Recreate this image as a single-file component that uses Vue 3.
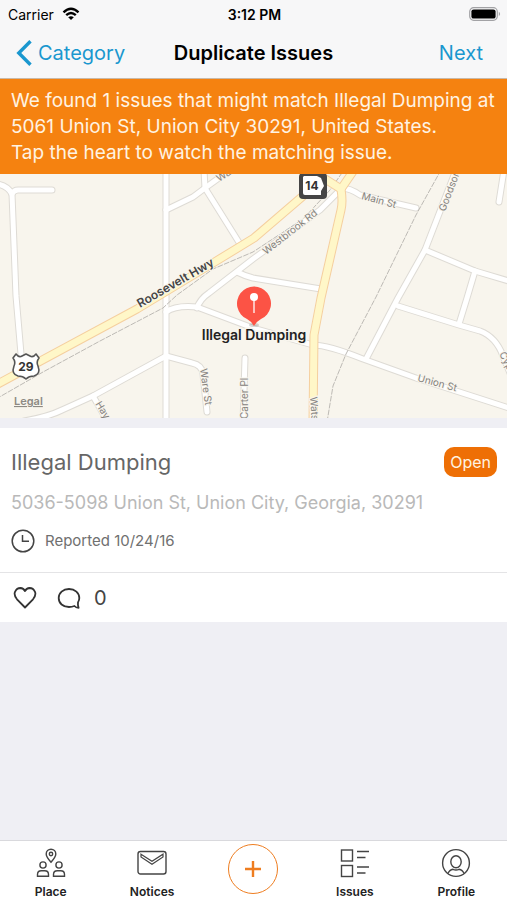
<script setup>
import { ref } from 'vue'

const issue = {
    title: 'Illegal Dumping',
    status: 'Open',
    address: '5036-5098 Union St, Union City, Georgia, 30291',
    reported: '10/24/16',
    comments: 0
}

const watching = ref(false)

const streets = [
    'M-4 10 Q7 11 12 20 L16 122 L21 180',
    'M12 20 Q14 16 18 16 L52 16',
    'M166 -4 V250',
    'M166 36 L193 23 L205 14 L230 -4',
    'M204 -4 L205 14 L240 70',
    'M341 15 L320 36 L253 85 L209 119 Q200 125 197 134',
    'M237 98 Q245 102 253 104 L321 115',
    'M166 138 Q176 131 197 133 L253 154 L313 171 Q328 171 363 185 L416 204 L512 235',
    'M456 -4 L425 76 L398 124 L366 185',
    'M425 76 L475 97 L512 108',
    'M475 97 L467 124 L459 150',
    'M398 132 L459 151 L480 157 Q496 163 503 182 L512 204',
    'M504 -4 L499 28',
    'M341 14 Q350 14 360 21 L416 34',
    'M24 247 Q48 243 62 236 L93 222 L166 182 L192 189 Q202 191 203 200 L207 238',
    'M93 222 L108 248',
    'M245 184 L243 250'
]

const highways = [
    'M-4 211 L137 135 L213 89 L254 64 L303 22 L318 8',
    'M322 3 L341 15',
    'M354 -4 L341 15 Q343 28 341 36 L321 124 L314 161 L313 250'
]

const railways = [
    'M-4 225 L43 198 L100 167 L163 134 L177 121 L213 95 L253 78 L303 45 L330 16 L344 -4',
    'M441 -4 L416 41 L376 123 L346 180 L333 212 L327 248'
]

const roadNames = [
    { text: 'Roosevelt Hwy', x: 140, y: 134, angle: -30, major: true },
    { text: 'Westbrook Rd', x: 266, y: 81, angle: -38 },
    { text: 'Main St', x: 361, y: 25, angle: 15 },
    { text: 'Goodson', x: 445, y: 38, angle: -69 },
    { text: 'Wa', x: 219, y: 8, angle: -32 },
    { text: 'Union St', x: 417, y: 207, angle: 15 },
    { text: 'Ware St', x: 200, y: 195, angle: 82 },
    { text: 'Carter Pl', x: 248, y: 245, angle: -90 },
    { text: 'Hay', x: 95, y: 230, angle: 58 },
    { text: 'Wats', x: 310, y: 223, angle: 86 },
    { text: 'Cyp', x: 499, y: 180, angle: 62 }
]
</script>

<template>
    <div class="screen">
        <header class="top">
            <div class="status-bar">
                <span class="carrier">
                    Carrier
                    <svg width="18" height="14" viewBox="0 0 18 14" fill="none" stroke="#000" stroke-width="2.4">
                        <path d="M1.5 5.3 Q9 -1.6 16.5 5.3" />
                        <path d="M4.2 8.2 Q9 3.9 13.8 8.2" />
                        <path d="M9 13 L6.2 10.3 Q9 8 11.8 10.3 Z" fill="#000" stroke="none" />
                    </svg>
                </span>
                <span class="time">3:12 PM</span>
                <svg class="battery" width="32" height="14" viewBox="0 0 32 14">
                    <rect x="0.7" y="0.7" width="27.6" height="12.6" rx="4" fill="none" stroke="#a2a2a5" stroke-width="1.2" />
                    <rect x="2.4" y="2.4" width="24.2" height="9.2" rx="2.2" />
                    <path d="M29.8 4.8 Q32.4 7 29.8 9.2 Z" fill="#a2a2a5" />
                </svg>
            </div>
            <nav class="nav-bar">
                <a href="#" class="nav-link">
                    <svg width="16" height="26" viewBox="0 0 16 26" fill="none" stroke="#1a97cf" stroke-width="3.4">
                        <path d="M14.5 1.3 L2.8 13 L14.5 24.7" />
                    </svg>
                    Category
                </a>
                <h1>Duplicate Issues</h1>
                <a href="#" class="nav-link next">Next</a>
            </nav>
        </header>

        <p class="banner">
            We found 1 issues that might match Illegal Dumping at 5061 Union St, Union City 30291, United States.<br>
            Tap the heart to watch the matching issue.
        </p>

        <svg class="map" viewBox="0 0 507 244" preserveAspectRatio="xMidYMid slice">
            <g class="street-edge"><path v-for="d in streets" :key="d" :d="d" /></g>
            <g class="street"><path v-for="d in streets" :key="d" :d="d" /></g>
            <g class="rail"><path v-for="d in railways" :key="d" :d="d" /></g>
            <g class="highway-edge"><path v-for="d in highways" :key="d" :d="d" /></g>
            <g class="highway"><path v-for="d in highways" :key="d" :d="d" /></g>

            <text
                v-for="name in roadNames"
                :key="name.text"
                class="road-name"
                :class="{ major: name.major }"
                :transform="`translate(${name.x} ${name.y}) rotate(${name.angle})`"
            >{{ name.text }}</text>

            <!-- state route 14 -->
            <rect x="299" y="-1" width="28" height="26" rx="4" fill="#454545" />
            <path d="M304 2 H317 L321 4 L324 12 L321 17 V21 H305 Q303 21 303 19 V3 Z" fill="#fff" />
            <text class="shield" x="312" y="16">14</text>

            <!-- US 29 -->
            <path
                d="M16 180 Q19 184 22 182 L26 180 L30 182 Q33 184 36 180 L39 184 Q36 188 38 192 Q41 200 34 202 Q29 202 26 205 Q23 202 18 202 Q11 200 14 192 Q16 188 13 184 Z"
                fill="#fff" stroke="#555" stroke-width="1.6" stroke-linejoin="round"
            />
            <text class="shield" x="26" y="197">29</text>

            <!-- pin -->
            <ellipse cx="254" cy="151" rx="5" ry="2" fill="#000" opacity="0.15" />
            <path d="M254 152 Q251 147 247 145 A17 17 0 1 1 261 145 Q257 147 254 152 Z" fill="#fc5345" />
            <path d="M254 125 V139" stroke="#fff" stroke-width="1.6" opacity="0.8" />
            <circle cx="254" cy="123" r="4" fill="#fff" />
            <text class="pin-label" x="254" y="166">Illegal Dumping</text>

            <a href="#"><text class="legal" x="14" y="231">Legal</text></a>
        </svg>

        <main class="issue">
            <div class="details">
                <div class="heading">
                    <h2>{{ issue.title }}</h2>
                    <span class="badge">{{ issue.status }}</span>
                </div>
                <p class="address">{{ issue.address }}</p>
                <p class="reported">
                    <svg width="24" height="24" viewBox="0 0 24 24" fill="none" stroke="#444" stroke-width="1.5">
                        <circle cx="12" cy="12" r="10.8" />
                        <path d="M11.5 6 V12.2 H18" />
                    </svg>
                    Reported {{ issue.reported }}
                </p>
            </div>
            <div class="actions">
                <button type="button" aria-label="Watch" :aria-pressed="watching" @click="watching = !watching">
                    <svg width="24" height="24" viewBox="0 0 24 24" :fill="watching ? '#ee6f05' : 'none'" stroke="#333" stroke-width="1.8" stroke-linejoin="round">
                        <path d="M12 21.5 L4 13.3 Q0.6 9.2 2 5.8 Q3.8 2 7.4 2 Q10.6 2.2 12 5 Q13.4 2.2 16.6 2 Q20.2 2 22 5.8 Q23.4 9.2 20 13.3 Z" />
                    </svg>
                </button>
                <button type="button" class="comments">
                    <svg width="24" height="24" viewBox="0 0 24 24" fill="none" stroke="#333" stroke-width="1.8" stroke-linejoin="round">
                        <path d="M21 16.4 Q22.3 14.3 22.3 12 C22.3 7 18 3 12 3 C6 3 1.7 7 1.7 12 C1.7 17.2 6 21 12 21 Q15 21 17.4 20 Q19 21.8 21.6 21.8 Q20.6 19.4 21 16.4 Z" />
                    </svg>
                    {{ issue.comments }}
                </button>
            </div>
        </main>

        <nav class="tab-bar">
            <a href="#" class="tab">
                <svg width="30" height="30" viewBox="0 0 30 30" fill="none" stroke="#444" stroke-width="1.4">
                    <path d="M15 14.3 Q10.2 8.8 10.2 6 A4.8 4.8 0 0 1 19.8 6 Q19.8 8.8 15 14.3 Z" />
                    <circle cx="15" cy="6" r="1.7" />
                    <circle cx="7" cy="17" r="3.1" />
                    <path d="M1.5 28.3 V26.5 Q1.5 22.8 5.3 22.8 H8.7 Q12.5 22.8 12.5 26.5 V28.3 Z" />
                    <circle cx="23" cy="17" r="3.1" />
                    <path d="M17.5 28.3 V26.5 Q17.5 22.8 21.3 22.8 H24.7 Q28.5 22.8 28.5 26.5 V28.3 Z" />
                </svg>
                Place
            </a>
            <a href="#" class="tab">
                <svg width="30" height="30" viewBox="0 0 30 30" fill="none" stroke="#444" stroke-width="1.4">
                    <rect x="1" y="3.5" width="28" height="22.5" rx="2.5" />
                    <path d="M4 6.2 L15 13.2 L26 6.2 V9 L15 16.3 L4 9 Z" stroke-width="1.2" />
                </svg>
                Notices
            </a>
            <div class="tab">
                <button type="button" class="add" aria-label="Add issue">
                    <svg width="16" height="16" viewBox="0 0 16 16" stroke="#ee7d20" stroke-width="2.4">
                        <path d="M8 0 V16 M0 8 H16" />
                    </svg>
                </button>
            </div>
            <a href="#" class="tab">
                <svg width="30" height="30" viewBox="0 0 30 30" fill="none" stroke="#444" stroke-width="1.4">
                    <rect x="1.5" y="2" width="11" height="11" />
                    <rect x="1.5" y="17.5" width="11" height="11" />
                    <path d="M17 3.5 H29 M17 9.5 H25.5 M17 19 H29 M17 25 H25.5" />
                </svg>
                Issues
            </a>
            <a href="#" class="tab">
                <svg width="30" height="30" viewBox="0 0 30 30" fill="none" stroke="#444" stroke-width="1.4">
                    <circle cx="15" cy="15" r="13.4" />
                    <ellipse cx="15" cy="13.8" rx="5.2" ry="6" />
                    <path d="M7 25.6 Q8.4 21.8 12 21.3 Q15 22.6 18 21.3 Q21.6 21.8 23 25.6" />
                </svg>
                Profile
            </a>
        </nav>
    </div>
</template>

<style>
body {
    margin: 0;
    background: #efeff4;
}
</style>

<style scoped>
.screen {
    display: flex;
    flex-direction: column;
    min-height: 100vh;
    background: #efeff4;
    color: #000;
    font-family: Inter, "Liberation Sans", sans-serif;
}

h1, h2, p {
    margin: 0;
    font-weight: 400;
}

a {
    text-decoration: none;
}

button {
    padding: 0;
    border: 0;
    background: none;
    color: inherit;
    font: inherit;
}

.top {
    background: #f7f7f8;
    border-bottom: 1px solid #c9b9a8;
}

.status-bar,
.nav-bar {
    display: grid;
    grid-template-columns: 1fr auto 1fr;
    align-items: center;
}

.status-bar {
    height: 28px;
    padding: 0 6px 0 8px;
    font-size: 14px;
}

.carrier {
    display: flex;
    align-items: center;
    gap: 8px;
}

.time {
    font-weight: 600;
}

.battery {
    justify-self: end;
}

.nav-bar {
    height: 50px;
    padding: 0 16px;
    font-size: 20px;
}

.nav-bar h1 {
    font-size: 20px;
    font-weight: 600;
}

.nav-link {
    display: flex;
    align-items: center;
    gap: 6px;
    color: #1a97cf;
}

.next {
    justify-self: end;
    padding-right: 8px;
}

.banner {
    padding: 9px 8px 8px 11px;
    background: #f58210;
    color: #fff3e2;
    font-size: 19px;
    line-height: 26px;
}

.map {
    display: block;
    width: 100%;
    height: 244px;
    background: #f8f5ed;
}

.map path {
    stroke-linejoin: round;
}

.street-edge,
.street,
.rail,
.highway-edge,
.highway {
    fill: none;
    stroke-linecap: round;
}

.street-edge {
    stroke: #dedbd5;
    stroke-width: 7px;
}

.street {
    stroke: #fff;
    stroke-width: 5px;
}

.rail {
    stroke: #bdbab5;
    stroke-width: 1px;
    stroke-dasharray: 5 2;
}

.highway-edge {
    stroke: #f5cf9f;
    stroke-width: 9px;
}

.highway {
    stroke: #fff7c8;
    stroke-width: 7px;
}

.road-name {
    fill: #85827e;
    stroke: #f8f5ed;
    stroke-width: 2px;
    paint-order: stroke;
    font-size: 10px;
}

.road-name.major {
    fill: #444;
    font-size: 12px;
    font-weight: 600;
}

.shield {
    fill: #333;
    font-size: 12px;
    font-weight: 700;
    text-anchor: middle;
}

.pin-label {
    fill: #222;
    stroke: #f8f5ed;
    stroke-width: 3px;
    paint-order: stroke;
    font-size: 14px;
    font-weight: 600;
    text-anchor: middle;
}

.legal {
    fill: #8d8a84;
    font-size: 11px;
    font-weight: 600;
    text-decoration: underline;
}

.issue {
    margin-top: 10px;
    background: #fff;
}

.details {
    padding: 18px 10px 19px 11px;
    border-bottom: 1px solid #e4e4e6;
}

.heading {
    display: flex;
    align-items: center;
    justify-content: space-between;
}

.heading h2 {
    color: #666;
    font-size: 22px;
    line-height: 32px;
}

.badge {
    padding: 0 6px;
    border-radius: 10px;
    background: #ee6f05;
    color: #fff3e2;
    font-size: 16px;
    line-height: 30px;
}

.address {
    margin-top: 12px;
    color: #b9b9b9;
    font-size: 18px;
    line-height: 26px;
}

.reported {
    display: flex;
    align-items: center;
    gap: 10px;
    margin-top: 13px;
    color: #707070;
    font-size: 15px;
    line-height: 24px;
}

.actions {
    display: flex;
    align-items: center;
    gap: 20px;
    height: 49px;
    padding: 0 13px;
}

.actions button {
    display: flex;
    align-items: center;
}

.actions .comments {
    gap: 13px;
    color: #444;
    font-size: 20px;
}

.tab-bar {
    display: grid;
    grid-template-columns: repeat(5, 1fr);
    height: 59px;
    margin-top: auto;
    border-top: 1px solid #d9d9dd;
    background: #fff;
}

.tab {
    display: flex;
    flex-direction: column;
    align-items: center;
    gap: 6px;
    padding-top: 7px;
    color: #222;
    font-size: 12px;
    font-weight: 600;
    line-height: 16px;
}

.add {
    display: flex;
    align-items: center;
    justify-content: center;
    width: 50px;
    height: 50px;
    margin-top: -4px;
    border: 1px solid #ee7d20;
    border-radius: 50%;
}
</style>
